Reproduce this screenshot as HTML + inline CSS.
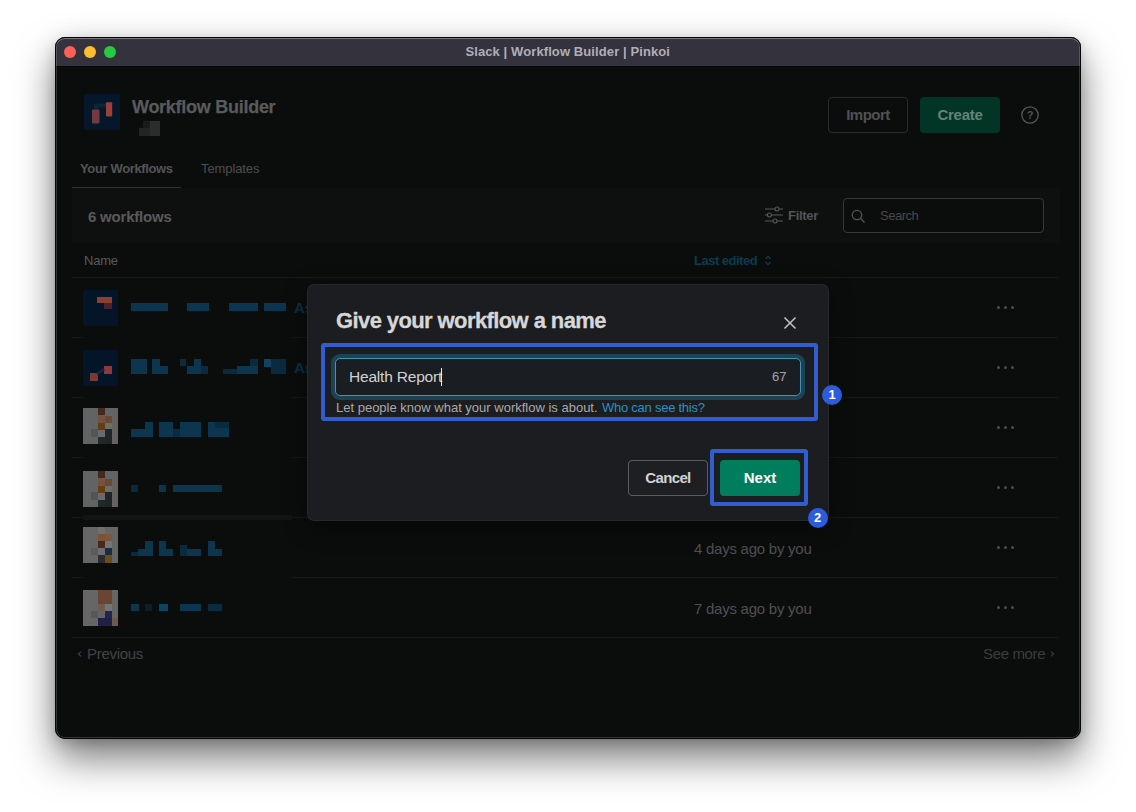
<!DOCTYPE html>
<html lang="en">
<head>
<meta charset="utf-8">
<title>Slack | Workflow Builder | Pinkoi</title>
<style>
*{box-sizing:border-box;margin:0;padding:0}
html,body{width:1136px;height:812px;overflow:hidden;background:#fff;font-family:"Liberation Sans",sans-serif;}
.abs{position:absolute}
#win{position:absolute;left:55px;top:37px;width:1025.5px;height:702px;border-radius:10px;background:#0b0d0d;
 box-shadow:0 20px 38px rgba(0,0,0,.5),0 4px 12px rgba(0,0,0,.14),0 0 30px rgba(0,0,0,.06);overflow:hidden}
#win:after{content:"";position:absolute;inset:0;border-radius:10px;border:1px solid #060607;box-shadow:inset 0 0 0 1px rgba(255,255,255,.17),inset 0 1px 0 0 rgba(255,255,255,.2);pointer-events:none}
#tbar{position:absolute;left:0;top:0;width:100%;height:29px;background:#34323d;box-shadow:0 1px 0 #060707}
.tl{position:absolute;top:9px;width:12px;height:12px;border-radius:50%}
#ttl{position:absolute;left:0;width:100%;top:7px;text-align:center;font-weight:bold;font-size:13px;color:#b0afb7;letter-spacing:.1px}
.t{position:absolute;white-space:nowrap;line-height:1}
.hline{position:absolute;height:1px;background:#151718}
.row-ic{position:absolute;left:28px;width:36px;height:36px}
.dots{position:absolute;left:942px;width:19px;height:4px}
.dots i{position:absolute;top:0;width:3px;height:3px;border-radius:50%;background:#4a4b4d}
.badge{width:20px;height:20px;border-radius:50%;background:#2c5bdc;color:#fff;font-size:13px;font-weight:bold;text-align:center;line-height:20px}
.time{color:#4f5052;font-size:15px;letter-spacing:-.25px}
</style>
</head>
<body>
<div id="win">
  <div id="tbar">
    <div class="tl" style="left:9px;background:#ff5f57"></div>
    <div class="tl" style="left:29px;background:#febc2e"></div>
    <div class="tl" style="left:49px;background:#28c840"></div>
    <div id="ttl">Slack | Workflow Builder | Pinkoi</div>
  </div>

  <!-- header -->
  <svg class="abs" style="left:28.5px;top:56.5px" width="36.5" height="36" viewBox="0 0 36.5 36"><rect width="36.5" height="36" rx="3" fill="#04172b"/><path d="M12 15.5 V11.5 H22" fill="none" stroke="#0a2736" stroke-width="4"/><rect x="22" y="8.3" width="6.2" height="14.2" rx="1" fill="#9c3f3b"/><rect x="8" y="15.5" width="7.5" height="14" rx="1" fill="#74383f"/></svg>
  <div class="abs" style="left:84px;top:91px;width:11px;height:8px;background:#232425;filter:blur(.6px)"></div>
  <div class="abs" style="left:95px;top:84px;width:10px;height:15px;background:#2b2c2d;filter:blur(.6px)"></div>
  <div class="abs" style="left:88px;top:84px;width:7px;height:7px;background:#1a1b1c;filter:blur(.6px)"></div>
  <div class="t" style="left:77px;top:60.6px;font-size:18px;font-weight:bold;letter-spacing:-.27px;color:#595a5c;-webkit-text-stroke:.25px #595a5c">Workflow Builder</div>

  <div class="abs" style="left:773px;top:60px;width:80px;height:36px;border:1px solid #292b2d;border-radius:4px"></div>
  <div class="t" style="left:773px;top:70px;width:80px;text-align:center;font-size:15px;font-weight:bold;letter-spacing:-.5px;color:#505153">Import</div>
  <div class="abs" style="left:865px;top:60px;width:80px;height:36px;background:#033526;border-radius:4px"></div>
  <div class="t" style="left:865px;top:70px;width:80px;text-align:center;font-size:15px;font-weight:bold;letter-spacing:-.3px;color:#668277">Create</div>

  <!-- tabs -->
  <div class="t" style="left:25px;top:125px;font-size:13px;font-weight:bold;letter-spacing:-.36px;color:#535456">Your Workflows</div>
  <div class="t" style="left:146px;top:125px;font-size:13px;letter-spacing:-.1px;color:#4d4e50">Templates</div>
  <div class="abs" style="left:17px;top:150.3px;width:109px;height:2px;background:#0e3f31"></div>

  <div class="abs" style="left:126px;top:150.6px;width:879px;height:1px;background:#161819"></div>
  <!-- toolbar band -->
  <div class="abs" style="left:17px;top:151px;width:988px;height:55px;background:#0e1010"></div>
  <div class="t" style="left:33px;top:172px;font-size:15px;font-weight:bold;letter-spacing:-.2px;color:#595a5c">6 workflows</div>
  <div class="t" style="left:733px;top:172px;font-size:13px;font-weight:bold;letter-spacing:-.3px;color:#535456">Filter</div>
  <div class="abs" style="left:788px;top:160.5px;width:201px;height:35px;border:1px solid #36383a;border-radius:4px;background:#0b0d0d"></div>
  <div class="t" style="left:825px;top:172px;font-size:13px;letter-spacing:-.5px;color:#47484a">Search</div>

  <!-- table header -->
  <div class="t" style="left:29px;top:217px;font-size:13px;letter-spacing:-.2px;color:#58595b">Name</div>
  <div class="t" style="left:639px;top:217px;font-size:13px;font-weight:bold;letter-spacing:-.5px;color:#0d3b4e">Last edited</div>
  <div class="hline" style="left:17px;top:240px;width:986px"></div>

  <!-- rows -->
  <div class="hline" style="left:17px;top:300px;width:11px"></div><div class="hline" style="left:236px;top:300px;width:767px"></div>
  <div class="hline" style="left:17px;top:360px;width:11px"></div><div class="hline" style="left:236px;top:360px;width:767px"></div>
  <div class="hline" style="left:17px;top:420px;width:11px"></div><div class="hline" style="left:236px;top:420px;width:767px"></div>
  <div class="hline" style="left:17px;top:480px;width:11px"></div><div class="hline" style="left:236px;top:480px;width:767px"></div>
  <div class="hline" style="left:17px;top:540px;width:11px"></div><div class="hline" style="left:236px;top:540px;width:767px"></div>
  <div class="hline" style="left:17px;top:600px;width:986px"></div>
  <div class="dots" style="top:269px"><i style="left:0"></i><i style="left:7px"></i><i style="left:14px"></i></div>
  <div class="dots" style="top:329px"><i style="left:0"></i><i style="left:7px"></i><i style="left:14px"></i></div>
  <div class="dots" style="top:389px"><i style="left:0"></i><i style="left:7px"></i><i style="left:14px"></i></div>
  <div class="dots" style="top:449px"><i style="left:0"></i><i style="left:7px"></i><i style="left:14px"></i></div>
  <div class="dots" style="top:509px"><i style="left:0"></i><i style="left:7px"></i><i style="left:14px"></i></div>
  <div class="dots" style="top:569px"><i style="left:0"></i><i style="left:7px"></i><i style="left:14px"></i></div>
  <svg class="abs" style="left:28px;top:253px;filter:blur(.6px)" width="35" height="36" viewBox="0 0 35 36"><rect width="35" height="36" rx="2" fill="#04152a"/><rect x="14" y="7" width="15" height="6" fill="#8c3f33"/><rect x="21" y="13" width="8" height="6" fill="#4a2231"/></svg>
  <svg class="abs" style="left:28px;top:313px;filter:blur(.6px)" width="35" height="36" viewBox="0 0 35 36"><rect width="35" height="36" rx="2" fill="#04152a"/><rect x="21" y="16" width="8" height="8" fill="#8c3a3c"/><rect x="7" y="23" width="8" height="8" fill="#7a3a30"/><path d="M14 24 L21 19" stroke="#1a2236" stroke-width="3"/></svg>
  <svg class="abs" style="left:28px;top:371px;filter:blur(.5px)" width="35" height="36" viewBox="0 0 35 36"><rect width="35" height="36" fill="#626364"/><rect x="15" y="0" width="7" height="7" fill="#45291c"/><rect x="15" y="7" width="7" height="8" fill="#735441"/><rect x="22" y="8" width="7" height="7" fill="#684839"/><rect x="15" y="15" width="7" height="7" fill="#673c12"/><rect x="22" y="15" width="7" height="7" fill="#6a6d6a"/><rect x="8" y="21" width="7" height="8" fill="#545458"/><rect x="15" y="22" width="7" height="7" fill="#696a6c"/><rect x="22" y="21" width="7" height="15" fill="#1f2528"/><rect x="15" y="29" width="7" height="7" fill="#23282b"/><rect x="29" y="0" width="6" height="36" fill="#66625f"/></svg>
  <svg class="abs" style="left:28px;top:434px;filter:blur(.5px)" width="35" height="36" viewBox="0 0 35 36"><rect width="35" height="36" fill="#626364"/><rect x="15" y="0" width="7" height="7" fill="#45291c"/><rect x="15" y="7" width="7" height="8" fill="#735441"/><rect x="22" y="8" width="7" height="7" fill="#684839"/><rect x="15" y="15" width="7" height="7" fill="#673c12"/><rect x="22" y="15" width="7" height="7" fill="#6a6d6a"/><rect x="8" y="21" width="7" height="8" fill="#545458"/><rect x="15" y="22" width="7" height="7" fill="#696a6c"/><rect x="22" y="21" width="7" height="15" fill="#1f2528"/><rect x="15" y="29" width="7" height="7" fill="#23282b"/><rect x="29" y="0" width="6" height="36" fill="#66625f"/></svg>
  <svg class="abs" style="left:28px;top:490px;filter:blur(.5px)" width="35" height="36" viewBox="0 0 35 36"><rect width="35" height="36" fill="#666667"/><rect x="15" y="0" width="7" height="7" fill="#707071"/><rect x="15" y="7" width="7" height="7" fill="#7a5236"/><rect x="22" y="7" width="7" height="7" fill="#7a583f"/><rect x="15" y="14" width="7" height="7" fill="#48291a"/><rect x="22" y="14" width="7" height="7" fill="#757576"/><rect x="8" y="21" width="7" height="7" fill="#5b5b5d"/><rect x="15" y="21" width="7" height="7" fill="#6e6e70"/><rect x="22" y="21" width="7" height="7" fill="#1e2a3e"/><rect x="15" y="28" width="7" height="8" fill="#2a2c30"/><rect x="22" y="28" width="7" height="8" fill="#6a4f14"/></svg>
  <svg class="abs" style="left:28px;top:553px;filter:blur(.5px)" width="35" height="36" viewBox="0 0 35 36"><rect width="35" height="36" fill="#666667"/><rect x="15" y="0" width="14" height="14" fill="#6a4632"/><rect x="15" y="14" width="7" height="7" fill="#6d5c50"/><rect x="22" y="14" width="7" height="7" fill="#747475"/><rect x="8" y="21" width="7" height="7" fill="#58585a"/><rect x="15" y="21" width="7" height="7" fill="#646467"/><rect x="22" y="21" width="7" height="7" fill="#22264a"/><rect x="15" y="28" width="14" height="8" fill="#1f2244"/><rect x="29" y="28" width="6" height="8" fill="#6d5a4c"/></svg>
  <div class="abs" style="left:76px;top:266px;width:37px;height:8px;background:#0c3650"></div>
  <div class="abs" style="left:132px;top:266px;width:22px;height:8px;background:#0c3650"></div>
  <div class="abs" style="left:174px;top:266px;width:29px;height:8px;background:#0c3650"></div>
  <div class="abs" style="left:209px;top:266px;width:22px;height:8px;background:#0c3650"></div>
  <div class="abs" style="left:76px;top:322px;width:16px;height:15px;background:#0c3650"></div>
  <div class="abs" style="left:97px;top:322px;width:8px;height:15px;background:#0c3650"></div>
  <div class="abs" style="left:105px;top:329px;width:8px;height:8px;background:#0c3650"></div>
  <div class="abs" style="left:125px;top:322px;width:6px;height:7px;background:#0a2a3f"></div>
  <div class="abs" style="left:132px;top:329px;width:14px;height:8px;background:#0c3650"></div>
  <div class="abs" style="left:139px;top:322px;width:7px;height:7px;background:#0c3650"></div>
  <div class="abs" style="left:146px;top:329px;width:7px;height:8px;background:#0a2a3f"></div>
  <div class="abs" style="left:168px;top:332px;width:14px;height:5px;background:#0a2a3f"></div>
  <div class="abs" style="left:182px;top:329px;width:21px;height:8px;background:#0c3650"></div>
  <div class="abs" style="left:195px;top:322px;width:8px;height:7px;background:#0a2a3f"></div>
  <div class="abs" style="left:209px;top:322px;width:7px;height:8px;background:#0e4463"></div>
  <div class="abs" style="left:216px;top:322px;width:15px;height:15px;background:#0a2a3f"></div>
  <div class="abs" style="left:76px;top:392px;width:14px;height:8px;background:#0c3650"></div>
  <div class="abs" style="left:90px;top:385px;width:8px;height:15px;background:#0c3650"></div>
  <div class="abs" style="left:104px;top:385px;width:14px;height:15px;background:#0c3650"></div>
  <div class="abs" style="left:118px;top:392px;width:7px;height:8px;background:#0a2a3f"></div>
  <div class="abs" style="left:125px;top:385px;width:21px;height:15px;background:#0c3650"></div>
  <div class="abs" style="left:153px;top:385px;width:21px;height:15px;background:#0c3650"></div>
  <div class="abs" style="left:160px;top:385px;width:14px;height:6px;background:#0a2a3f"></div>
  <div class="abs" style="left:76px;top:448px;width:7px;height:7px;background:#0a2a3f"></div>
  <div class="abs" style="left:104px;top:448px;width:7px;height:7px;background:#0c3650"></div>
  <div class="abs" style="left:118px;top:448px;width:49px;height:7px;background:#0c3650"></div>
  <div class="abs" style="left:76px;top:515px;width:7px;height:4px;background:#0a2a3f"></div>
  <div class="abs" style="left:83px;top:512px;width:7px;height:7px;background:#0c3650"></div>
  <div class="abs" style="left:90px;top:504px;width:8px;height:15px;background:#0c3650"></div>
  <div class="abs" style="left:104px;top:504px;width:7px;height:15px;background:#0c3650"></div>
  <div class="abs" style="left:111px;top:512px;width:7px;height:7px;background:#0c3650"></div>
  <div class="abs" style="left:125px;top:508px;width:7px;height:11px;background:#0a2a3f"></div>
  <div class="abs" style="left:132px;top:512px;width:14px;height:7px;background:#0c3650"></div>
  <div class="abs" style="left:153px;top:504px;width:7px;height:15px;background:#0c3650"></div>
  <div class="abs" style="left:160px;top:512px;width:7px;height:7px;background:#0c3650"></div>
  <div class="abs" style="left:76px;top:567px;width:8px;height:7px;background:#0c3650"></div>
  <div class="abs" style="left:90px;top:567px;width:7px;height:7px;background:#0a1f2c"></div>
  <div class="abs" style="left:104px;top:567px;width:9px;height:7px;background:#0e4463"></div>
  <div class="abs" style="left:125px;top:567px;width:21px;height:7px;background:#0c3650"></div>
  <div class="abs" style="left:153px;top:567px;width:14px;height:7px;background:#0a2a3f"></div>
  <div class="abs" style="left:28px;top:478px;width:209px;height:5px;background:#121415"></div>


  <!-- "As" clipped text -->
  <div class="t" style="left:239px;top:263px;font-size:15px;font-weight:bold;color:#0b3144">As</div>
  <div class="t" style="left:239px;top:323px;font-size:15px;font-weight:bold;color:#0b3144">As</div>

  <!-- times -->
  <div class="t time" style="left:639px;top:504px">4 days ago by you</div>
  <div class="t time" style="left:639px;top:564px">7 days ago by you</div>

  <!-- footer -->
  <svg class="abs" style="left:21.5px;top:613.5px" width="5" height="6" viewBox="0 0 5 6"><path d="M4 .6 L1.4 3 L4 5.4" fill="none" stroke="#3e3f41" stroke-width="1.2"/></svg>
  <div class="t" style="left:32px;top:609px;font-size:15px;letter-spacing:-.3px;color:#424345">Previous</div>
  <div class="t" style="left:928px;top:609px;font-size:15px;letter-spacing:-.35px;color:#3b3c3e">See more</div>
  <svg class="abs" style="left:995.3px;top:613.8px" width="5" height="6" viewBox="0 0 5 6"><path d="M1 .6 L3.6 3 L1 5.4" fill="none" stroke="#3a3b3d" stroke-width="1.2"/></svg>

  <!-- help icon -->
  <svg class="abs" style="left:965px;top:68px" width="20" height="20" viewBox="0 0 20 20"><circle cx="10" cy="10" r="8.2" fill="none" stroke="#565759" stroke-width="1.3"/><text x="10" y="14" text-anchor="middle" font-family="Liberation Sans, sans-serif" font-size="11" font-weight="bold" fill="#4f5052">?</text></svg>

  <!-- filter icon -->
  <svg class="abs" style="left:709px;top:168px" width="20" height="20" viewBox="0 0 20 20" fill="none" stroke="#58595b" stroke-width="1.05"><path d="M1 4h10M15 4h4M1 10h2.4M7.4 10h11.6M1 16h8M13 16h6"/><circle cx="13" cy="4" r="2"/><circle cx="5.4" cy="10" r="2"/><circle cx="11" cy="16" r="2"/></svg>

  <!-- search icon -->
  <svg class="abs" style="left:795px;top:171px" width="16" height="16" viewBox="0 0 16 16" fill="none" stroke="#525355" stroke-width="1.3"><circle cx="7" cy="7" r="4.7"/><path d="M10.8 10.8 L14.5 14.5"/></svg>

  <!-- sort icon -->
  <svg class="abs" style="left:709px;top:218px" width="8" height="11" viewBox="0 0 8 11" fill="none" stroke="#0d3b4e" stroke-width="1.3"><path d="M1.5 4 L4 1.5 L6.5 4M1.5 7 L4 9.5 L6.5 7"/></svg>

  <!-- modal -->
  <div class="abs" id="modal" style="left:252px;top:247px;width:522px;height:237px;background:#1c1d20;border-radius:7px;box-shadow:inset 0 0 0 1px rgba(255,255,255,.05),0 6px 24px rgba(0,0,0,.45)"></div>

  <div class="t" style="left:281px;top:273px;font-size:22px;font-weight:bold;letter-spacing:-.6px;color:#d7d7d8;-webkit-text-stroke:.3px #d7d7d8">Give your workflow a name</div>
  <svg class="abs" style="left:728px;top:279px" width="14" height="14" viewBox="0 0 14 14"><path d="M1.5 1.5 L12.5 12.5 M12.5 1.5 L1.5 12.5" stroke="#c4c5c6" stroke-width="1.5" fill="none"/></svg>

  <!-- highlight 1 -->
  <div class="abs" style="left:266px;top:306px;width:497px;height:78px;border:4px solid #325cd0;border-radius:3px"></div>
  <div class="abs" style="left:280px;top:321px;width:466px;height:38px;border:1px solid #4593ae;border-radius:5px;background:#1a1d21;box-shadow:0 0 0 4px rgba(29,155,209,.3)"></div>
  <div class="t" style="left:294px;top:332px;font-size:15.5px;letter-spacing:-.2px;color:#d1d2d3">Health Report</div>
  <div class="abs" style="left:386px;top:331px;width:1px;height:18px;background:#e8e8e8"></div>
  <div class="t" style="left:717px;top:333px;font-size:13px;color:#a3a4a6">67</div>
  <div class="t" style="left:281px;top:364px;font-size:13px;color:#a9aaac"><span id="h1">Let people know what your workflow is about.</span> <span id="h2" style="color:#2792c0;letter-spacing:-.25px;margin-left:.8px">Who can see this?</span></div>
  <div class="abs badge" style="left:767px;top:348px">1</div>

  <!-- buttons -->
  <div class="abs" style="left:573px;top:423px;width:80px;height:36px;border:1px solid #5b5c5f;border-radius:4px;background:#1e1f22"></div>
  <div class="t" style="left:573px;top:433px;width:80px;text-align:center;font-size:15px;font-weight:bold;letter-spacing:-.65px;color:#d1d2d3">Cancel</div>
  <div class="abs" style="left:655.4px;top:412.3px;width:98px;height:56.4px;border:4px solid #325cd0;border-radius:3px"></div>
  <div class="abs" style="left:665px;top:423px;width:80px;height:36px;border-radius:4px;background:#007d5c"></div>
  <div class="t" style="left:665px;top:433px;width:80px;text-align:center;font-size:15px;font-weight:bold;color:#fff">Next</div>
  <div class="abs badge" style="left:752.5px;top:470.5px">2</div>
</div>
</body>
</html>
